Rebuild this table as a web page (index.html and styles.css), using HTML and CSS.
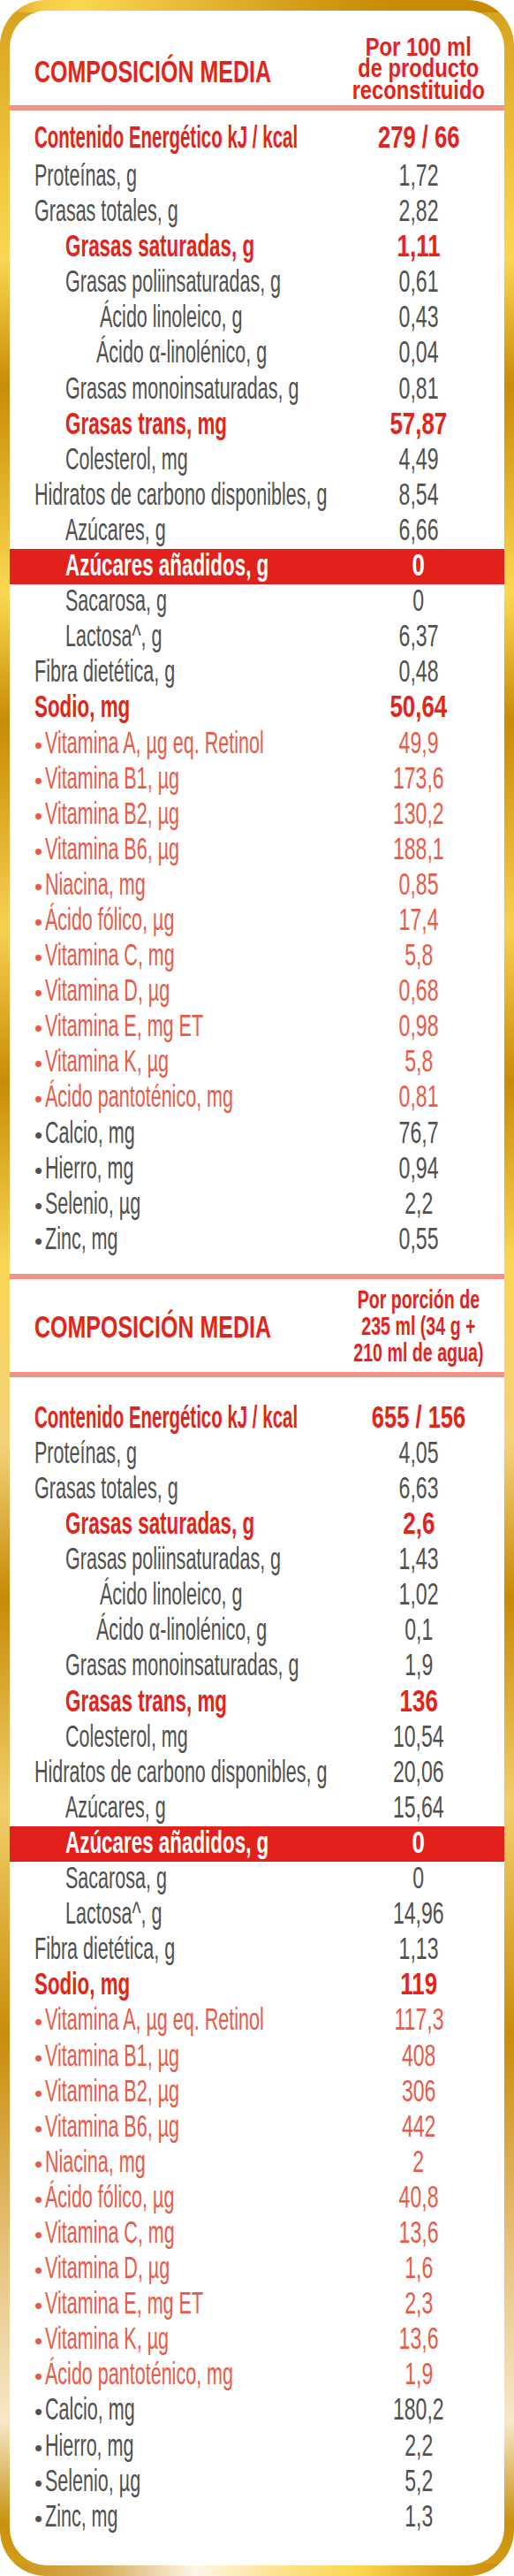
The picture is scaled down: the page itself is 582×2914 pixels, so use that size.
FILE: index.html
```html
<!DOCTYPE html>
<html lang="es">
<head>
<meta charset="utf-8">
<title>Composición media</title>
<link rel="stylesheet" href="styles.css">
</head>
<body>
<div class="frame">
  <div class="panel">

    <div class="head head-1">
      <div class="title"><span>COMPOSICIÓN MEDIA</span></div>
      <div class="per per-1"><span class="per-t">Por 100 ml<br>de producto<br>reconstituido</span></div>
    </div>
    <div class="rule"></div>

    <div class="rows">
      <div class="row hl k first-1"><div class="lab"><span class="t">Contenido Energético kJ / kcal</span></div><div class="val"><span class="v">279 / 66</span></div></div>
      <div class="row"><div class="lab"><span class="t">Proteínas, g</span></div><div class="val"><span class="v">1,72</span></div></div>
      <div class="row"><div class="lab"><span class="t">Grasas totales, g</span></div><div class="val"><span class="v">2,82</span></div></div>
      <div class="row hl"><div class="lab l1"><span class="t">Grasas saturadas, g</span></div><div class="val"><span class="v">1,11</span></div></div>
      <div class="row"><div class="lab l1"><span class="t">Grasas poliinsaturadas, g</span></div><div class="val"><span class="v">0,61</span></div></div>
      <div class="row"><div class="lab l2a"><span class="t">Ácido linoleico, g</span></div><div class="val"><span class="v">0,43</span></div></div>
      <div class="row"><div class="lab l2b"><span class="t">Ácido α-linolénico, g</span></div><div class="val"><span class="v">0,04</span></div></div>
      <div class="row"><div class="lab l1"><span class="t">Grasas monoinsaturadas, g</span></div><div class="val"><span class="v">0,81</span></div></div>
      <div class="row hl"><div class="lab l1"><span class="t">Grasas trans, mg</span></div><div class="val"><span class="v">57,87</span></div></div>
      <div class="row"><div class="lab l1"><span class="t">Colesterol, mg</span></div><div class="val"><span class="v">4,49</span></div></div>
      <div class="row"><div class="lab"><span class="t">Hidratos de carbono disponibles, g</span></div><div class="val"><span class="v">8,54</span></div></div>
      <div class="row"><div class="lab l1"><span class="t">Azúcares, g</span></div><div class="val"><span class="v">6,66</span></div></div>
      <div class="row added"><div class="lab l1"><span class="t">Azúcares añadidos, g</span></div><div class="val"><span class="v">0</span></div></div>
      <div class="row"><div class="lab l1"><span class="t">Sacarosa, g</span></div><div class="val"><span class="v">0</span></div></div>
      <div class="row"><div class="lab l1"><span class="t">Lactosa^, g</span></div><div class="val"><span class="v">6,37</span></div></div>
      <div class="row"><div class="lab"><span class="t">Fibra dietética, g</span></div><div class="val"><span class="v">0,48</span></div></div>
      <div class="row hl"><div class="lab"><span class="t">Sodio, mg</span></div><div class="val"><span class="v">50,64</span></div></div>
      <div class="row vit"><div class="lab"><span class="dot">•</span><span class="t">Vitamina A, µg eq. Retinol</span></div><div class="val"><span class="v">49,9</span></div></div>
      <div class="row vit"><div class="lab"><span class="dot">•</span><span class="t">Vitamina B1, µg</span></div><div class="val"><span class="v">173,6</span></div></div>
      <div class="row vit"><div class="lab"><span class="dot">•</span><span class="t">Vitamina B2, µg</span></div><div class="val"><span class="v">130,2</span></div></div>
      <div class="row vit"><div class="lab"><span class="dot">•</span><span class="t">Vitamina B6, µg</span></div><div class="val"><span class="v">188,1</span></div></div>
      <div class="row vit"><div class="lab"><span class="dot">•</span><span class="t">Niacina, mg</span></div><div class="val"><span class="v">0,85</span></div></div>
      <div class="row vit"><div class="lab"><span class="dot">•</span><span class="t">Ácido fólico, µg</span></div><div class="val"><span class="v">17,4</span></div></div>
      <div class="row vit"><div class="lab"><span class="dot">•</span><span class="t">Vitamina C, mg</span></div><div class="val"><span class="v">5,8</span></div></div>
      <div class="row vit"><div class="lab"><span class="dot">•</span><span class="t">Vitamina D, µg</span></div><div class="val"><span class="v">0,68</span></div></div>
      <div class="row vit"><div class="lab"><span class="dot">•</span><span class="t">Vitamina E, mg ET</span></div><div class="val"><span class="v">0,98</span></div></div>
      <div class="row vit"><div class="lab"><span class="dot">•</span><span class="t">Vitamina K, µg</span></div><div class="val"><span class="v">5,8</span></div></div>
      <div class="row vit"><div class="lab"><span class="dot">•</span><span class="t">Ácido pantoténico, mg</span></div><div class="val"><span class="v">0,81</span></div></div>
      <div class="row"><div class="lab"><span class="dot">•</span><span class="t">Calcio, mg</span></div><div class="val"><span class="v">76,7</span></div></div>
      <div class="row"><div class="lab"><span class="dot">•</span><span class="t">Hierro, mg</span></div><div class="val"><span class="v">0,94</span></div></div>
      <div class="row"><div class="lab"><span class="dot">•</span><span class="t">Selenio, µg</span></div><div class="val"><span class="v">2,2</span></div></div>
      <div class="row"><div class="lab"><span class="dot">•</span><span class="t">Zinc, mg</span></div><div class="val"><span class="v">0,55</span></div></div>
    </div>

    <div class="rule rule-sep"></div>
    <div class="head head-2">
      <div class="title"><span>COMPOSICIÓN MEDIA</span></div>
      <div class="per per-2"><span class="per-t">Por porción de<br>235 ml (34 g +<br>210 ml de agua)</span></div>
    </div>
    <div class="rule"></div>

    <div class="rows">
      <div class="row hl k first-2"><div class="lab"><span class="t">Contenido Energético kJ / kcal</span></div><div class="val"><span class="v">655 / 156</span></div></div>
      <div class="row"><div class="lab"><span class="t">Proteínas, g</span></div><div class="val"><span class="v">4,05</span></div></div>
      <div class="row"><div class="lab"><span class="t">Grasas totales, g</span></div><div class="val"><span class="v">6,63</span></div></div>
      <div class="row hl"><div class="lab l1"><span class="t">Grasas saturadas, g</span></div><div class="val"><span class="v">2,6</span></div></div>
      <div class="row"><div class="lab l1"><span class="t">Grasas poliinsaturadas, g</span></div><div class="val"><span class="v">1,43</span></div></div>
      <div class="row"><div class="lab l2a"><span class="t">Ácido linoleico, g</span></div><div class="val"><span class="v">1,02</span></div></div>
      <div class="row"><div class="lab l2b"><span class="t">Ácido α-linolénico, g</span></div><div class="val"><span class="v">0,1</span></div></div>
      <div class="row"><div class="lab l1"><span class="t">Grasas monoinsaturadas, g</span></div><div class="val"><span class="v">1,9</span></div></div>
      <div class="row hl"><div class="lab l1"><span class="t">Grasas trans, mg</span></div><div class="val"><span class="v">136</span></div></div>
      <div class="row"><div class="lab l1"><span class="t">Colesterol, mg</span></div><div class="val"><span class="v">10,54</span></div></div>
      <div class="row"><div class="lab"><span class="t">Hidratos de carbono disponibles, g</span></div><div class="val"><span class="v">20,06</span></div></div>
      <div class="row"><div class="lab l1"><span class="t">Azúcares, g</span></div><div class="val"><span class="v">15,64</span></div></div>
      <div class="row added"><div class="lab l1"><span class="t">Azúcares añadidos, g</span></div><div class="val"><span class="v">0</span></div></div>
      <div class="row"><div class="lab l1"><span class="t">Sacarosa, g</span></div><div class="val"><span class="v">0</span></div></div>
      <div class="row"><div class="lab l1"><span class="t">Lactosa^, g</span></div><div class="val"><span class="v">14,96</span></div></div>
      <div class="row"><div class="lab"><span class="t">Fibra dietética, g</span></div><div class="val"><span class="v">1,13</span></div></div>
      <div class="row hl"><div class="lab"><span class="t">Sodio, mg</span></div><div class="val"><span class="v">119</span></div></div>
      <div class="row vit"><div class="lab"><span class="dot">•</span><span class="t">Vitamina A, µg eq. Retinol</span></div><div class="val"><span class="v">117,3</span></div></div>
      <div class="row vit"><div class="lab"><span class="dot">•</span><span class="t">Vitamina B1, µg</span></div><div class="val"><span class="v">408</span></div></div>
      <div class="row vit"><div class="lab"><span class="dot">•</span><span class="t">Vitamina B2, µg</span></div><div class="val"><span class="v">306</span></div></div>
      <div class="row vit"><div class="lab"><span class="dot">•</span><span class="t">Vitamina B6, µg</span></div><div class="val"><span class="v">442</span></div></div>
      <div class="row vit"><div class="lab"><span class="dot">•</span><span class="t">Niacina, mg</span></div><div class="val"><span class="v">2</span></div></div>
      <div class="row vit"><div class="lab"><span class="dot">•</span><span class="t">Ácido fólico, µg</span></div><div class="val"><span class="v">40,8</span></div></div>
      <div class="row vit"><div class="lab"><span class="dot">•</span><span class="t">Vitamina C, mg</span></div><div class="val"><span class="v">13,6</span></div></div>
      <div class="row vit"><div class="lab"><span class="dot">•</span><span class="t">Vitamina D, µg</span></div><div class="val"><span class="v">1,6</span></div></div>
      <div class="row vit"><div class="lab"><span class="dot">•</span><span class="t">Vitamina E, mg ET</span></div><div class="val"><span class="v">2,3</span></div></div>
      <div class="row vit"><div class="lab"><span class="dot">•</span><span class="t">Vitamina K, µg</span></div><div class="val"><span class="v">13,6</span></div></div>
      <div class="row vit"><div class="lab"><span class="dot">•</span><span class="t">Ácido pantoténico, mg</span></div><div class="val"><span class="v">1,9</span></div></div>
      <div class="row"><div class="lab"><span class="dot">•</span><span class="t">Calcio, mg</span></div><div class="val"><span class="v">180,2</span></div></div>
      <div class="row"><div class="lab"><span class="dot">•</span><span class="t">Hierro, mg</span></div><div class="val"><span class="v">2,2</span></div></div>
      <div class="row"><div class="lab"><span class="dot">•</span><span class="t">Selenio, µg</span></div><div class="val"><span class="v">5,2</span></div></div>
      <div class="row"><div class="lab"><span class="dot">•</span><span class="t">Zinc, mg</span></div><div class="val"><span class="v">1,3</span></div></div>
    </div>

  </div>
</div>
</body>
</html>
```
FILE: styles.css
```css
html, body {
  margin: 0;
  padding: 0;
  background: #ffffff;
}

.frame {
  width: 582px;
  height: 2914px;
  box-sizing: border-box;
  padding: 12px 11px;
  border-radius: 52px;
  background:
    linear-gradient(to right, #d39c17 0%, #f5cb45 8%, #fcd850 15%, #ebbb3a 35%, #d7a01d 55%, #c98c03 75%, #c68900 100%) top / 100% 14px no-repeat,
    linear-gradient(to right, #c99010 0%, #d8ae5c 20%, #fdf6e8 38%, #fde28a 55%, #fbd74c 70%, #dba51e 86%, #c68a02 100%) bottom / 100% 14px no-repeat,
    linear-gradient(180deg, #d5a01c 0%, #f3c842 7%, #fbd652 10%, #c98c06 15%, #fcd852 23%, #c88b05 28%, #f8d050 36%, #c98c07 42%, #fad654 49%, #f4d27a 56%, #c78a05 62%, #f2cf6a 70%, #c98d0a 79%, #e6c078 87%, #f6e8c8 94%, #c8900c 98%, #d9a21a 100%);
}

.panel {
  height: 2890px;
  background: #ffffff;
  border-radius: 42px;
  overflow: hidden;
  font-family: "Liberation Sans", Arial, sans-serif;
}

/* ---------- headers ---------- */
.head {
  display: grid;
  grid-template-columns: minmax(0, 1fr) 140px;
  padding: 0 27px 0 28px;
  box-sizing: border-box;
  color: #e3241b;
  font-weight: 700;
  white-space: nowrap;
}
.head-1 { height: 107px; }
.head-2 { height: 105px; }

.title {
  font-size: 35px;
  line-height: 36px;
  min-width: 0;
}
.title span {
  display: inline-block;
  transform: scaleX(0.714);
  transform-origin: 0 50%;
}
.head-1 .title { padding-top: 51px; }
.head-2 .title { padding-top: 36px; }

.per {
  display: flex;
  justify-content: center;
  align-items: flex-start;
  font-size: 29.3px;
}
.per-t {
  display: block;
  text-align: center;
  transform-origin: 50% 50%;
}
.per-1 { line-height: 24.5px; padding-top: 28.6px; }
.per-1 .per-t { transform: scaleX(0.81); }
.per-2 { line-height: 30px; padding-top: 8px; }
.per-2 .per-t { transform: scaleX(0.67); }

.rule {
  height: 6px;
  background: #f39384;
}
.rule-sep { margin-top: 18px; }

/* ---------- rows ---------- */
.row {
  display: grid;
  grid-template-columns: minmax(0, 1fr) 140px;
  height: 40.1px;
  box-sizing: border-box;
  padding: 0 27px 0 28px;
  font-size: 35px;
  line-height: 36px;
  color: #505050;
  white-space: nowrap;
}
.row.first-1 { height: 55px; padding-top: 12px; }
.row.first-2 { height: 67px; padding-top: 27px; }

.lab { min-width: 0; }
.l1 { padding-left: 34.5px; }
.l2a { padding-left: 74px; }
.l2b { padding-left: 70px; }

.t {
  display: inline-block;
  transform: scaleX(0.615);
  transform-origin: 0 50%;
}
.dot {
  display: inline-block;
  width: 12px;
  font-size: 26px;
}

.val {
  display: flex;
  justify-content: center;
}
.v {
  display: inline-block;
  transform: scaleX(0.66);
  transform-origin: 50% 50%;
}

.row.hl {
  color: #e3241b;
  font-weight: 700;
}
.row.hl .t { transform: scaleX(0.64); }
.row.hl .v { transform: scaleX(0.74); }
.row.k .t { transform: scaleX(0.585); }
.row.k .v { transform: scaleX(0.73); }

.row.added {
  background: #e2211c;
  color: #ffffff;
  font-weight: 700;
}
.row.added .t { transform: scaleX(0.64); }
.row.added .v { transform: scaleX(0.74); }

.row.vit { color: #ea5a48; }
```
